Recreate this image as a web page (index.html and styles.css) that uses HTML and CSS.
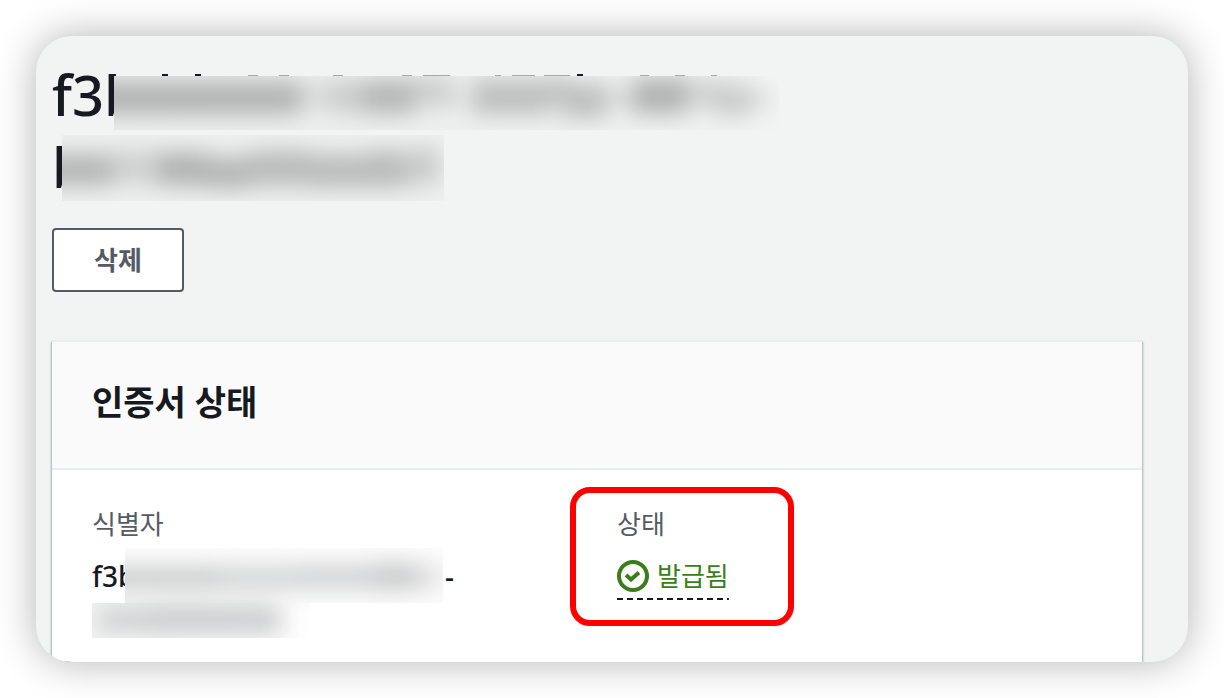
FILE: index.html
```html
<!DOCTYPE html>
<html lang="ko">
<head>
<meta charset="utf-8">
<meta name="viewport" content="width=device-width, initial-scale=1">
<title>인증서 상태</title>
<link rel="stylesheet" href="styles.css">
</head>
<body>
<main class="window">
  <header class="page-header">
    <h1 class="page-title">
      <span class="title-line">f3b</span>
      <span class="title-line">b</span>
      <svg class="redaction" width="728" height="130" viewBox="52 72 728 130" aria-hidden="true">
        <defs>
          <filter id="soft" x="-20%" y="-100%" width="140%" height="300%"><feGaussianBlur stdDeviation="11"/></filter>
          <clipPath id="title-a"><rect x="114" y="76" width="666" height="54"/></clipPath>
          <clipPath id="title-b"><rect x="62" y="135" width="382" height="66"/></clipPath>
          <linearGradient id="fade"><stop offset="0" stop-color="#ebecec"/><stop offset=".85" stop-color="#eff0f0"/><stop offset="1" stop-color="#f1f4f3"/></linearGradient>
        </defs>
        <path fill="#f1f4f3" d="M114 72h666v4H114z"/>
        <path fill="#16191f" d="M109 74h7v2h-7zM162 74h6v2h-6zM195 74h6v2h-6zM577 74h6v2h-6z"/>
        <path fill="#a6a9aa" d="M248 75h10v1h-10zM279 75h10v1h-10zM333 75h10v1h-10zM402 75h10v1h-10zM423 75h27v1h-27zM495 75h6v1h-6zM512 75h23v1h-23zM544 75h26v1h-26zM640 75h9v1h-9zM675 75h10v1h-10zM711 75h6v1h-6z"/>
        <g clip-path="url(#title-a)">
          <rect x="114" y="76" width="666" height="54" fill="url(#fade)"/>
          <g filter="url(#soft)" fill="#b1b3b3">
            <rect x="80" y="82" width="220" height="32"/>
            <rect x="300" y="84" width="160" height="24" opacity=".35"/>
            <rect x="330" y="80" width="36" height="34" opacity=".4"/>
            <rect x="364" y="80" width="50" height="34" opacity=".9"/>
            <rect x="414" y="76" width="36" height="26" opacity=".4"/>
            <rect x="472" y="80" width="80" height="34" opacity=".8"/>
            <rect x="550" y="78" width="20" height="24" opacity=".7"/>
            <rect x="562" y="84" width="44" height="34" opacity=".8"/>
            <rect x="606" y="92" width="22" height="12" opacity=".6"/>
            <rect x="632" y="78" width="54" height="36"/>
            <rect x="686" y="80" width="34" height="28" opacity=".5"/>
            <rect x="716" y="84" width="34" height="32" opacity=".6"/>
            <rect x="750" y="92" width="20" height="14" opacity=".5"/>
          </g>
        </g>
        <g clip-path="url(#title-b)">
          <rect x="62" y="135" width="382" height="66" fill="#eeefef"/>
          <g filter="url(#soft)" fill="#b1b3b3">
            <rect x="40" y="154" width="72" height="32" opacity=".95"/>
            <rect x="112" y="150" width="46" height="34" opacity=".5"/>
            <rect x="158" y="152" width="50" height="34"/>
            <rect x="206" y="157" width="44" height="32" opacity=".95"/>
            <rect x="250" y="150" width="60" height="36" opacity=".85"/>
            <rect x="310" y="154" width="96" height="34" opacity=".85"/>
            <rect x="370" y="148" width="28" height="16" opacity=".5"/>
            <rect x="406" y="148" width="34" height="36" opacity=".6"/>
          </g>
        </g>
      </svg>
    </h1>
    <button class="delete-button" type="button">삭제</button>
  </header>
  <section class="panel">
    <header class="panel-header"><h2 class="panel-title">인증서 상태</h2></header>
    <dl class="details">
      <div class="field">
        <dt class="label">식별자</dt>
        <dd class="identifier">
          <span>f3b</span><span>-</span>
          <svg class="redaction-small" width="352" height="92" viewBox="92 547 352 92" aria-hidden="true">
            <defs>
              <clipPath id="id-clip"><path d="M125 547h318v55H310v35H92v-35h33z"/></clipPath>
              <linearGradient id="id-fade"><stop offset="0" stop-color="#f3f4f4"/><stop offset=".8" stop-color="#f8f8f8"/><stop offset="1" stop-color="#fff"/></linearGradient>
            </defs>
            <g clip-path="url(#id-clip)">
              <path fill="#fcfcfc" d="M125 547h318v55H125z"/>
              <path fill="url(#id-fade)" d="M92 602h218v35H92z"/>
              <g filter="url(#soft)" fill="#c9cacb">
                <rect x="100" y="566" width="120" height="22"/>
                <rect x="220" y="566" width="78" height="22" opacity=".85"/>
                <rect x="298" y="564" width="76" height="24" opacity=".85"/>
                <rect x="374" y="562" width="44" height="27"/>
                <rect x="418" y="566" width="24" height="20" opacity=".6"/>
                <rect x="98" y="608" width="48" height="22" opacity=".9"/>
                <rect x="146" y="606" width="134" height="25"/>
              </g>
            </g>
          </svg>
        </dd>
      </div>
      <div class="field highlighted">
        <dt class="label">상태</dt>
        <dd class="value">
          <button class="status" type="button">
            <svg class="status-icon" viewBox="0 0 32 32" aria-hidden="true">
              <circle cx="16" cy="16" r="14"/>
              <path d="M9 15l5 4.500 8-7"/>
            </svg>
            <span>발급됨</span>
          </button>
        </dd>
      </div>
    </dl>
  </section>
</main>
</body>
</html>
```

FILE: styles.css
```css
*,
*::after {
  box-sizing: border-box;
}

body {
  margin: 0;
  min-height: 100vh;
  display: flex;
  padding: 36px;
  background: #fff;
  color: #16191f;
  font-family: "Noto Sans", "Noto Sans CJK KR", sans-serif;
  font-size: 26px;
  line-height: 44px;
}

.window {
  flex: 1;
  display: flex;
  flex-direction: column;
  min-width: 0;
  padding: 22px 46px 0 16px;
  overflow: hidden;
  border-radius: 36px;
  background: #f1f4f3;
  box-shadow: 0 0 40px rgba(0, 0, 0, 0.3);
}

.page-header {
  display: flex;
  flex-direction: column;
  align-items: flex-start;
  gap: 26px;
}

.page-title {
  position: relative;
  margin: 0;
  font-size: 56px;
  font-weight: 500;
  line-height: 72px;
}

.title-line {
  display: block;
}

.redaction {
  position: absolute;
  left: 0;
  top: 14px;
}

.delete-button {
  padding: 8px 40px;
  border: 2px solid #545b64;
  border-radius: 4px;
  background: #fff;
  color: #545b64;
  font: inherit;
  font-weight: 700;
  line-height: 44px;
}

.panel {
  flex: 1;
  margin-top: 48px;
  border-top: 2px solid #eaeded;
  background: #fff;
  box-shadow: 1px 2px 2px rgba(0, 28, 36, 0.3), -1px 2px 2px rgba(0, 28, 36, 0.3);
}

.panel-header {
  padding: 38px 40px 44px;
  border-bottom: 2px solid #eaeded;
  background: #fafafa;
}

.panel-title {
  margin: 0;
  font-size: 34px;
  font-weight: 700;
  line-height: 44px;
}

.details {
  display: grid;
  grid-template-columns: 1fr 1fr;
  gap: 40px;
  margin: 0;
  padding: 32px 40px 20px;
}

.field {
  position: relative;
  display: flex;
  flex-direction: column;
  gap: 8px;
}

.label {
  color: #545b64;
}

.value,
.identifier {
  margin: 0;
}

.identifier {
  position: relative;
  display: flex;
  justify-content: space-between;
  width: 362px;
  height: 88px;
  font-size: 28px;
  font-weight: 500;
}

.redaction-small {
  position: absolute;
  left: 0;
  top: -6px;
}

.status {
  display: inline-flex;
  align-items: center;
  gap: 8px;
  padding: 0 0 2px;
  border: 0;
  background: repeating-linear-gradient(90deg, #16191f 0 6px, transparent 6px 10px) bottom / 100% 2px no-repeat;
  color: #3a7d1c;
  font: inherit;
}

.status-icon {
  width: 32px;
  height: 32px;
  fill: none;
  stroke: currentColor;
  stroke-width: 4;
}

/* Annotation frame drawn over the status field */
.highlighted::after {
  content: "";
  position: absolute;
  left: -47px;
  top: -15px;
  width: 224px;
  height: 139px;
  border: 6px solid #f00;
  border-radius: 20px;
  pointer-events: none;
}
```
